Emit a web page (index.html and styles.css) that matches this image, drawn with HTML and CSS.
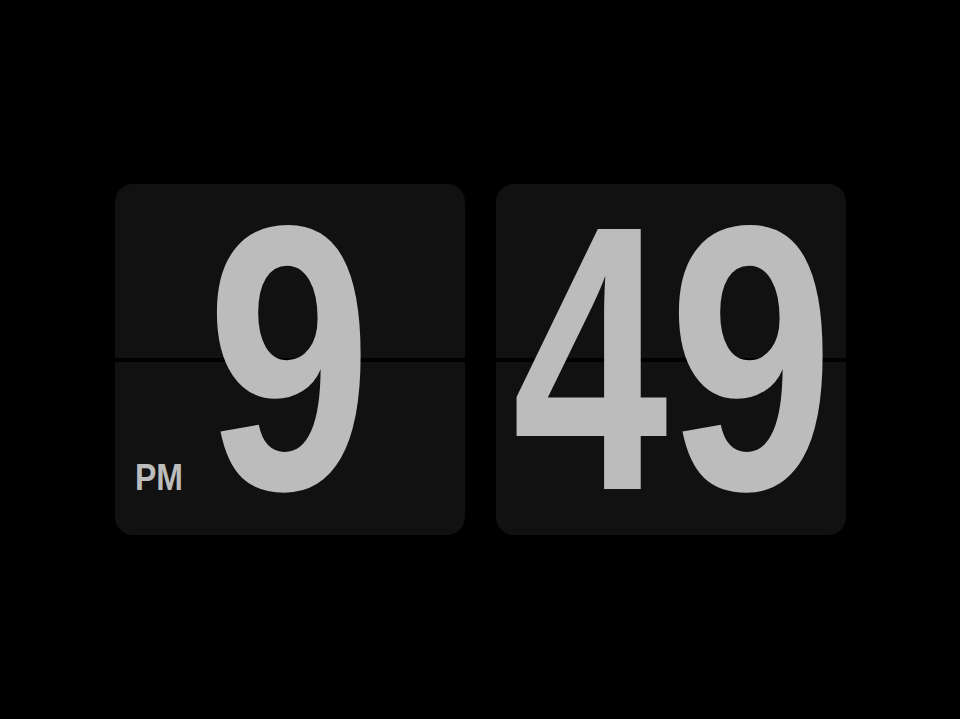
FILE: index.html
```html
<!DOCTYPE html>
<html>
<head>
<meta charset="utf-8">
<link rel="stylesheet" href="styles.css">
</head>
<body>
<main class="clock">
  <section class="card">
    <div class="digits">
      <span class="digit digit-9">9</span>
    </div>
    <div class="split"></div>
    <span class="ampm">PM</span>
  </section>
  <section class="card">
    <div class="digits">
      <span class="digit digit-4">4</span>
      <span class="digit digit-9">9</span>
    </div>
    <div class="split"></div>
  </section>
</main>
</body>
</html>
```
FILE: styles.css
```css
html, body {
  margin: 0;
  padding: 0;
  background: #000;
  height: 100%;
}
.clock {
  height: 719px;
  display: flex;
  align-items: center;
  justify-content: center;
  gap: 31px;
}
.card {
  width: 350px;
  height: 351px;
  background: #111111;
  border-radius: 18px;
  display: grid;
  grid-template: minmax(0, 1fr) / minmax(0, 1fr);
}
.card > * {
  grid-area: 1 / 1;
  min-width: 0;
  min-height: 0;
}
.digits {
  place-self: center;
  display: flex;
  justify-content: center;
  align-items: center;
}
.digit {
  margin: 0 -25px;
  font-family: "Liberation Sans", Arial, sans-serif;
  font-weight: 700;
  font-size: 378px;
  line-height: 0.8;
  color: #bcbcbc;
  display: inline-block;
}
.digit-9 {
  transform: translateY(-1px) scaleX(0.785);
}
.digit-4 {
  transform: translateY(-1px) scaleX(0.74);
}
.split {
  align-self: center;
  justify-self: stretch;
  height: 4px;
  margin-top: 1px;
  background: #000;
}
.ampm {
  align-self: end;
  justify-self: start;
  margin: 0 0 38px 20px;
  font-family: "Liberation Sans", Arial, sans-serif;
  font-weight: 700;
  font-size: 37.7px;
  line-height: 1;
  color: #bcbcbc;
  display: inline-block;
  transform: scaleX(0.85);
  transform-origin: left center;
}
```
